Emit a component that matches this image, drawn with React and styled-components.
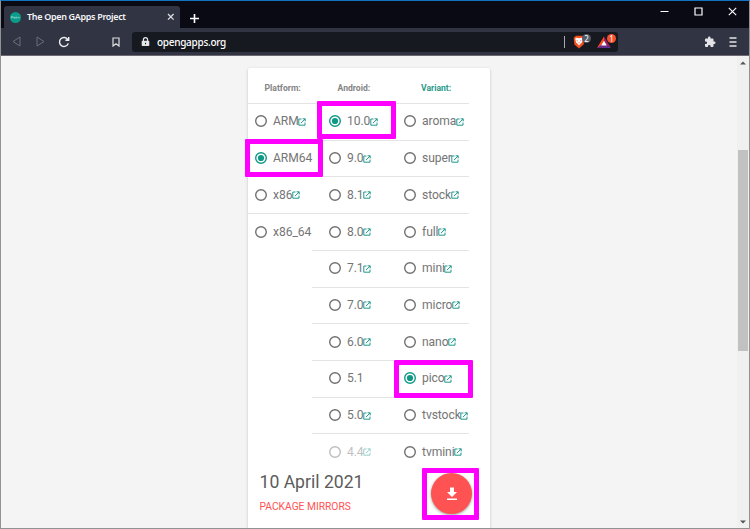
import React from "react";
import styled, { createGlobalStyle } from "styled-components";

const GlobalStyle = createGlobalStyle`
  * { box-sizing: border-box; }
  body { margin: 0; overflow: hidden; }
  svg { display: block; flex: none; }
`;

const Window = styled.div`
  width: 750px;
  height: 529px;
  display: flex;
  flex-direction: column;
  border: 1px solid #929294;
  border-top-color: #1473c1;
  background: #f4f4f4;
  overflow: hidden;
  position: relative;
`;

const TitleBar = styled.header`
  height: 27px;
  flex: none;
  display: flex;
  align-items: flex-end;
  background: #090a14;
  padding-left: 3px;
  color: #fff;
`;

const Tab = styled.div`
  width: 176px;
  height: 22px;
  display: flex;
  align-items: center;
  padding: 0 5px 0 6px;
  border-radius: 3px 3px 0 0;
  background: #313443;
`;

const TabTitle = styled.span`
  flex: 1;
  margin-left: 6px;
  font: 600 9px/14px "Noto Sans", sans-serif;
  letter-spacing: -0.33px;
  color: #f4f4f6;
  white-space: nowrap;
`;

const NewTab = styled.div`
  margin: 0 0 5px 10px;
`;

const WindowControls = styled.div`
  margin-left: auto;
  height: 21px;
  display: flex;
  gap: 25px;
  padding-right: 12px;
`;

const Toolbar = styled.nav`
  height: 28px;
  flex: none;
  display: flex;
  align-items: center;
  background: #313443;
  border-bottom: 1px solid #6c6872;
  padding: 0 11px 0 11px;
`;

const NavButtons = styled.div`
  width: 120px;
  display: flex;
  align-items: center;
`;

const Spacer = styled.div`
  width: ${(p) => p.$w}px;
  flex: none;
`;

const AddressBar = styled.div`
  width: 486px;
  height: 20px;
  display: flex;
  align-items: center;
  border-radius: 3px;
  background: #161920;
  padding: 0 2px 0 9px;
`;

const Address = styled.span`
  margin-left: 7px;
  flex: 1;
  font: 500 10px/14px "Noto Sans", sans-serif;
  letter-spacing: -0.28px;
  color: #fff;
`;

const Separator = styled.i`
  width: 1px;
  height: 12px;
  background: #a9aab0;
  margin-right: 8px;
`;

const Shield = styled.div`
  position: relative;
  width: ${(p) => p.$w}px;
  height: 14px;
  display: flex;
  align-items: center;
`;

const Badge = styled.span`
  position: absolute;
  top: -1px;
  right: 0;
  width: 9px;
  height: 9px;
  border-radius: 4.5px;
  background: ${(p) => p.$color};
  color: #fff;
  font: 8px/9px "Noto Sans", sans-serif;
  text-align: center;
`;

const Viewport = styled.main`
  flex: 1;
  min-height: 0;
  display: flex;
`;

const Page = styled.div`
  flex: 1;
  padding: 12px 0 0 247px;
  overflow: hidden;
`;

const Card = styled.section`
  width: 242px;
  height: 480px;
  background: #fff;
  border-radius: 2px;
  box-shadow: 0 1px 3px rgba(0, 0, 0, 0.22);
  font-family: Roboto, sans-serif;
  color: #757575;
`;

const Columns = styled.div`
  height: 401px;
  display: grid;
  grid-template-columns: 64px 75px 82px;
  overflow: hidden;
`;

const Heading = styled.div`
  height: 35px;
  padding: 13px 0 0 ${(p) => p.$indent}px;
  font-size: 8.6px;
  line-height: 14px;
  font-weight: 700;
  color: ${(p) => (p.$accent ? "#2b9a8c" : "#858585")};
  white-space: nowrap;
`;

const Option = styled.div`
  height: 36.72px;
  padding-bottom: 1px;
  border-top: 1px solid #e4e4e4;
  display: flex;
  align-items: center;
`;

const OptionLabel = styled.label`
  display: flex;
  align-items: center;
  padding-left: ${(p) => p.$indent}px;
  opacity: ${(p) => (p.$disabled ? 0.45 : 1)};
  font-size: 12.1px;
  line-height: 14px;
  letter-spacing: -0.07px;
  white-space: nowrap;
`;

const Radio = styled.span`
  width: 12px;
  height: 12px;
  flex: none;
  margin-right: 6px;
`;

const LinkMark = styled.span`
  margin: 1px 0 0 -0.5px;
`;

const Footer = styled.footer`
  display: flex;
  justify-content: space-between;
  padding: 4px 18px 0 11.5px;
`;

const ReleaseDate = styled.h2`
  margin: 0;
  padding-top: 0;
  font-size: 17.6px;
  line-height: 19px;
  font-weight: 400;
  color: #5c5c5c;
`;

const MirrorLink = styled.a`
  display: block;
  margin-top: 9px;
  font-size: 10.25px;
  line-height: 12px;
  color: #ff5252;
`;

const DownloadButton = styled.button`
  width: 41px;
  height: 41px;
  border: 0;
  border-radius: 50%;
  display: grid;
  place-items: center;
  background: #ff5252;
  box-shadow: 0 1px 3px rgba(0, 0, 0, 0.4);
`;

const Scrollbar = styled.div`
  width: 12px;
  display: flex;
  flex-direction: column;
  align-items: center;
  justify-content: space-between;
  padding: 5px 0 4px;
  background: #f0f0f0;
`;

const Thumb = styled.div`
  width: 10px;
  height: 201px;
  margin: 0 0 85px;
  background: #c1c1c1;
`;

const Highlight = styled.div`
  position: absolute;
  left: ${(p) => p.$x - 1}px;
  top: ${(p) => p.$y - 1}px;
  width: ${(p) => p.$w}px;
  height: ${(p) => p.$h}px;
  border: 5px solid #ff00ff;
  border-radius: 1px;
`;

const RadioMark = ({ on }) => (
  <Radio>
    <svg width="12" height="12" viewBox="0 0 12 12">
      <circle cx="6" cy="6" r="5.3" fill="none" stroke={on ? "#109887" : "#707070"} strokeWidth="1.4" />
      {on && <circle cx="6" cy="6" r="3.1" fill="#109887" />}
    </svg>
  </Radio>
);

const LinkIcon = () => (
  <LinkMark>
    <svg width="8" height="8" viewBox="0 0 8 8" fill="none" stroke="#20988a" strokeWidth="1">
      <path d="M3.500 1H.8v6.200H7V4.600M4.600.8h2.600v2.600M7.100 1 2.900 5.200" />
    </svg>
  </LinkMark>
);

const platforms = [["ARM", true], ["ARM64", false], ["x86", true], ["x86_64", false]];
const androids = [["10.0", true], ["9.0", true], ["8.1", true], ["8.0", true], ["7.1", true],
  ["7.0", true], ["6.0", true], ["5.1", false], ["5.0", true], ["4.4", true]];
const variants = ["aroma", "super", "stock", "full", "mini", "micro", "nano", "pico", "tvstock", "tvmini"]
  .map((name) => [name, true]);

function OptionColumn({ title, items, selected, indent, headingIndent, accent, disabled }) {
  return (
    <div>
      <Heading $indent={headingIndent} $accent={accent}>{title}</Heading>
      {items.map(([name, linked]) => (
        <Option key={name}>
          <OptionLabel $indent={indent} $disabled={name === disabled}>
            <RadioMark on={name === selected} />
            {name}
            {linked && <LinkIcon />}
          </OptionLabel>
        </Option>
      ))}
    </div>
  );
}

export default function App() {
  return (
    <Window>
      <GlobalStyle />
      <TitleBar>
        <Tab>
          <svg width="11" height="11" viewBox="0 0 11 11">
            <circle cx="5.5" cy="5.5" r="5.5" fill="#0b9b8a" />
            <path d="M1.5 6.5V4.4h1.3v1H1.5M3.8 5h1v1.2h-1zM5.8 6.3V5.1h1v.8h-1M7.8 6.3v-1h1.4v1" fill="none" stroke="#8fd3cb" strokeWidth=".7" />
          </svg>
          <TabTitle>The Open GApps Project</TabTitle>
          <svg width="8" height="8" viewBox="0 0 8 8"><path d="m1 1 5.6 5.6M6.6 1 1 6.6" stroke="#dedee2" strokeWidth="1.3" /></svg>
        </Tab>
        <NewTab>
          <svg width="9" height="9" viewBox="0 0 9 9"><path d="M4.5 0v9M0 4.5h9" stroke="#fff" strokeWidth="1.6" /></svg>
        </NewTab>
        <WindowControls>
          <svg width="9" height="9" viewBox="0 0 9 9"><path d="M.5 4.500h8" stroke="#fff" /></svg>
          <svg width="9" height="9" viewBox="0 0 9 9"><path d="M1 1h7v7H1z" fill="none" stroke="#fff" strokeWidth="1.2" /></svg>
          <svg width="9" height="9" viewBox="0 0 9 9"><path d="m.8.8 7.4 7.4M8.2.8.8 8.2" stroke="#fff" strokeWidth="1.1" /></svg>
        </WindowControls>
      </TitleBar>

      <Toolbar>
        <NavButtons>
          <svg width="9" height="11" viewBox="0 0 9 11"><path d="M8 1v9L1 5.5z" fill="none" stroke="#6b6d78" strokeLinejoin="round" /></svg>
          <Spacer $w={15} />
          <svg width="9" height="11" viewBox="0 0 9 11"><path d="M1 1v9l7-4.500z" fill="none" stroke="#6b6d78" strokeLinejoin="round" /></svg>
          <Spacer $w={13} />
          <svg width="12" height="12" viewBox="0 0 12 12"><path d="M10.300 7.400A4.500 4.500 0 1 1 9.800 3.500M10.700.9v3.300H7.400" fill="none" stroke="#efeff1" strokeWidth="1.4" /></svg>
          <Spacer $w={42} />
          <svg width="8" height="10" viewBox="0 0 8 10"><path d="M1 1h6v8L4 6.700 1 9z" fill="none" stroke="#dedee2" strokeWidth="1.2" /></svg>
        </NavButtons>
        <AddressBar>
          <svg width="9" height="10" viewBox="0 0 9 10">
            <path d="M2.400 4V2.700a2 2 0 0 1 4.200 0V4" fill="none" stroke="#e6e6e8" strokeWidth="1.200" />
            <path fillRule="evenodd" d="M1.500 3.700h6q.8 0 .8.8v3.800q0 .8-.8.8h-6q-.8 0-.8-.8V4.500q0-.8.8-.8zM4 5.700v1.600h1V5.700z" fill="#e6e6e8" />
          </svg>
          <Address>opengapps.org</Address>
          <Separator />
          <Shield $w={18}>
            <svg width="12" height="14" viewBox="0 0 12 14">
              <path d="M3 .8h6l2.300 2-.7 6.600-4.600 4-4.600-4L.7 2.800z" fill="#f4511e" />
              <path d="m2.200 3.500 1.600-.7 2.200.5 2.200-.5 1.600.7-.8 3.800L7 9.300 6 10.500 5 9.300 3 7.300z" fill="#fff" />
              <path d="m3.300 5 1.700.7-.6.800zM8.700 5 7 5.700l.6.800zM5.200 7.200h1.600L6 8.500z" fill="#f4511e" />
            </svg>
            <Badge $color="#555a68">2</Badge>
          </Shield>
          <Spacer $w={6} />
          <Shield $w={19}>
            <svg width="14" height="12" viewBox="0 0 14 12">
              <path d="M7 .5 0 12l7-4z" fill="#ff4a20" />
              <path d="m7 .5 7 11.500-7-4z" fill="#9e1f63" />
              <path d="M0 12h14L7 7.500z" fill="#662d91" />
              <path d="m7 4.800 2.800 4.700H4.200z" fill="#fff" />
            </svg>
            <Badge $color="#f4512c">1</Badge>
          </Shield>
        </AddressBar>
        <Spacer $w={86} />
        <svg width="12" height="12" viewBox="0 0 24 24">
          <path fill="#e4e4e8" d="M20.500 11H19V7a2 2 0 0 0-2-2h-4V3.500a2.500 2.500 0 0 0-5 0V5H4a2 2 0 0 0-2 2v3.800h1.500a2.700 2.700 0 0 1 0 5.400H2V20a2 2 0 0 0 2 2h3.800v-1.500a2.700 2.700 0 0 1 5.400 0V22H17a2 2 0 0 0 2-2v-4h1.500a2.500 2.500 0 0 0 0-5z" />
        </svg>
        <Spacer $w={13} />
        <svg width="8" height="10" viewBox="0 0 8 10"><path d="M.5 1h7M.5 5h7M.5 9h7" stroke="#e4e4e8" strokeWidth="1.400" /></svg>
      </Toolbar>

      <Viewport>
        <Page>
          <Card>
            <Columns>
              <OptionColumn title="Platform:" items={platforms} selected="ARM64" indent={7} headingIndent={16.5} />
              <OptionColumn title="Android:" items={androids} selected="10.0" indent={17} headingIndent={25.5} disabled="4.4" />
              <OptionColumn title="Variant:" items={variants} selected="pico" indent={17} headingIndent={34} accent />
            </Columns>
            <Footer>
              <div>
                <ReleaseDate>10 April 2021</ReleaseDate>
                <MirrorLink>PACKAGE MIRRORS</MirrorLink>
              </div>
              <DownloadButton aria-label="Download">
                <svg width="12" height="14" viewBox="0 0 12 14"><path d="M4 .5h4V5h3L6 10 1 5h3zM1 11.500h10V13H1z" fill="#fff" /></svg>
              </DownloadButton>
            </Footer>
          </Card>
        </Page>
        <Scrollbar>
          <svg width="6" height="4" viewBox="0 0 6 4"><path d="M0 3.500 3 .5l3 3z" fill="#555" /></svg>
          <Thumb />
          <svg width="6" height="4" viewBox="0 0 6 4"><path d="m0 .5 3 3 3-3z" fill="#555" /></svg>
        </Scrollbar>
      </Viewport>

      <Highlight $x={317} $y={101} $w={79} $h={38} />
      <Highlight $x={245} $y={139} $w={78} $h={38} />
      <Highlight $x={394} $y={360} $w={79} $h={38} />
      <Highlight $x={422} $y={468} $w={57} $h={52} />
    </Window>
  );
}
